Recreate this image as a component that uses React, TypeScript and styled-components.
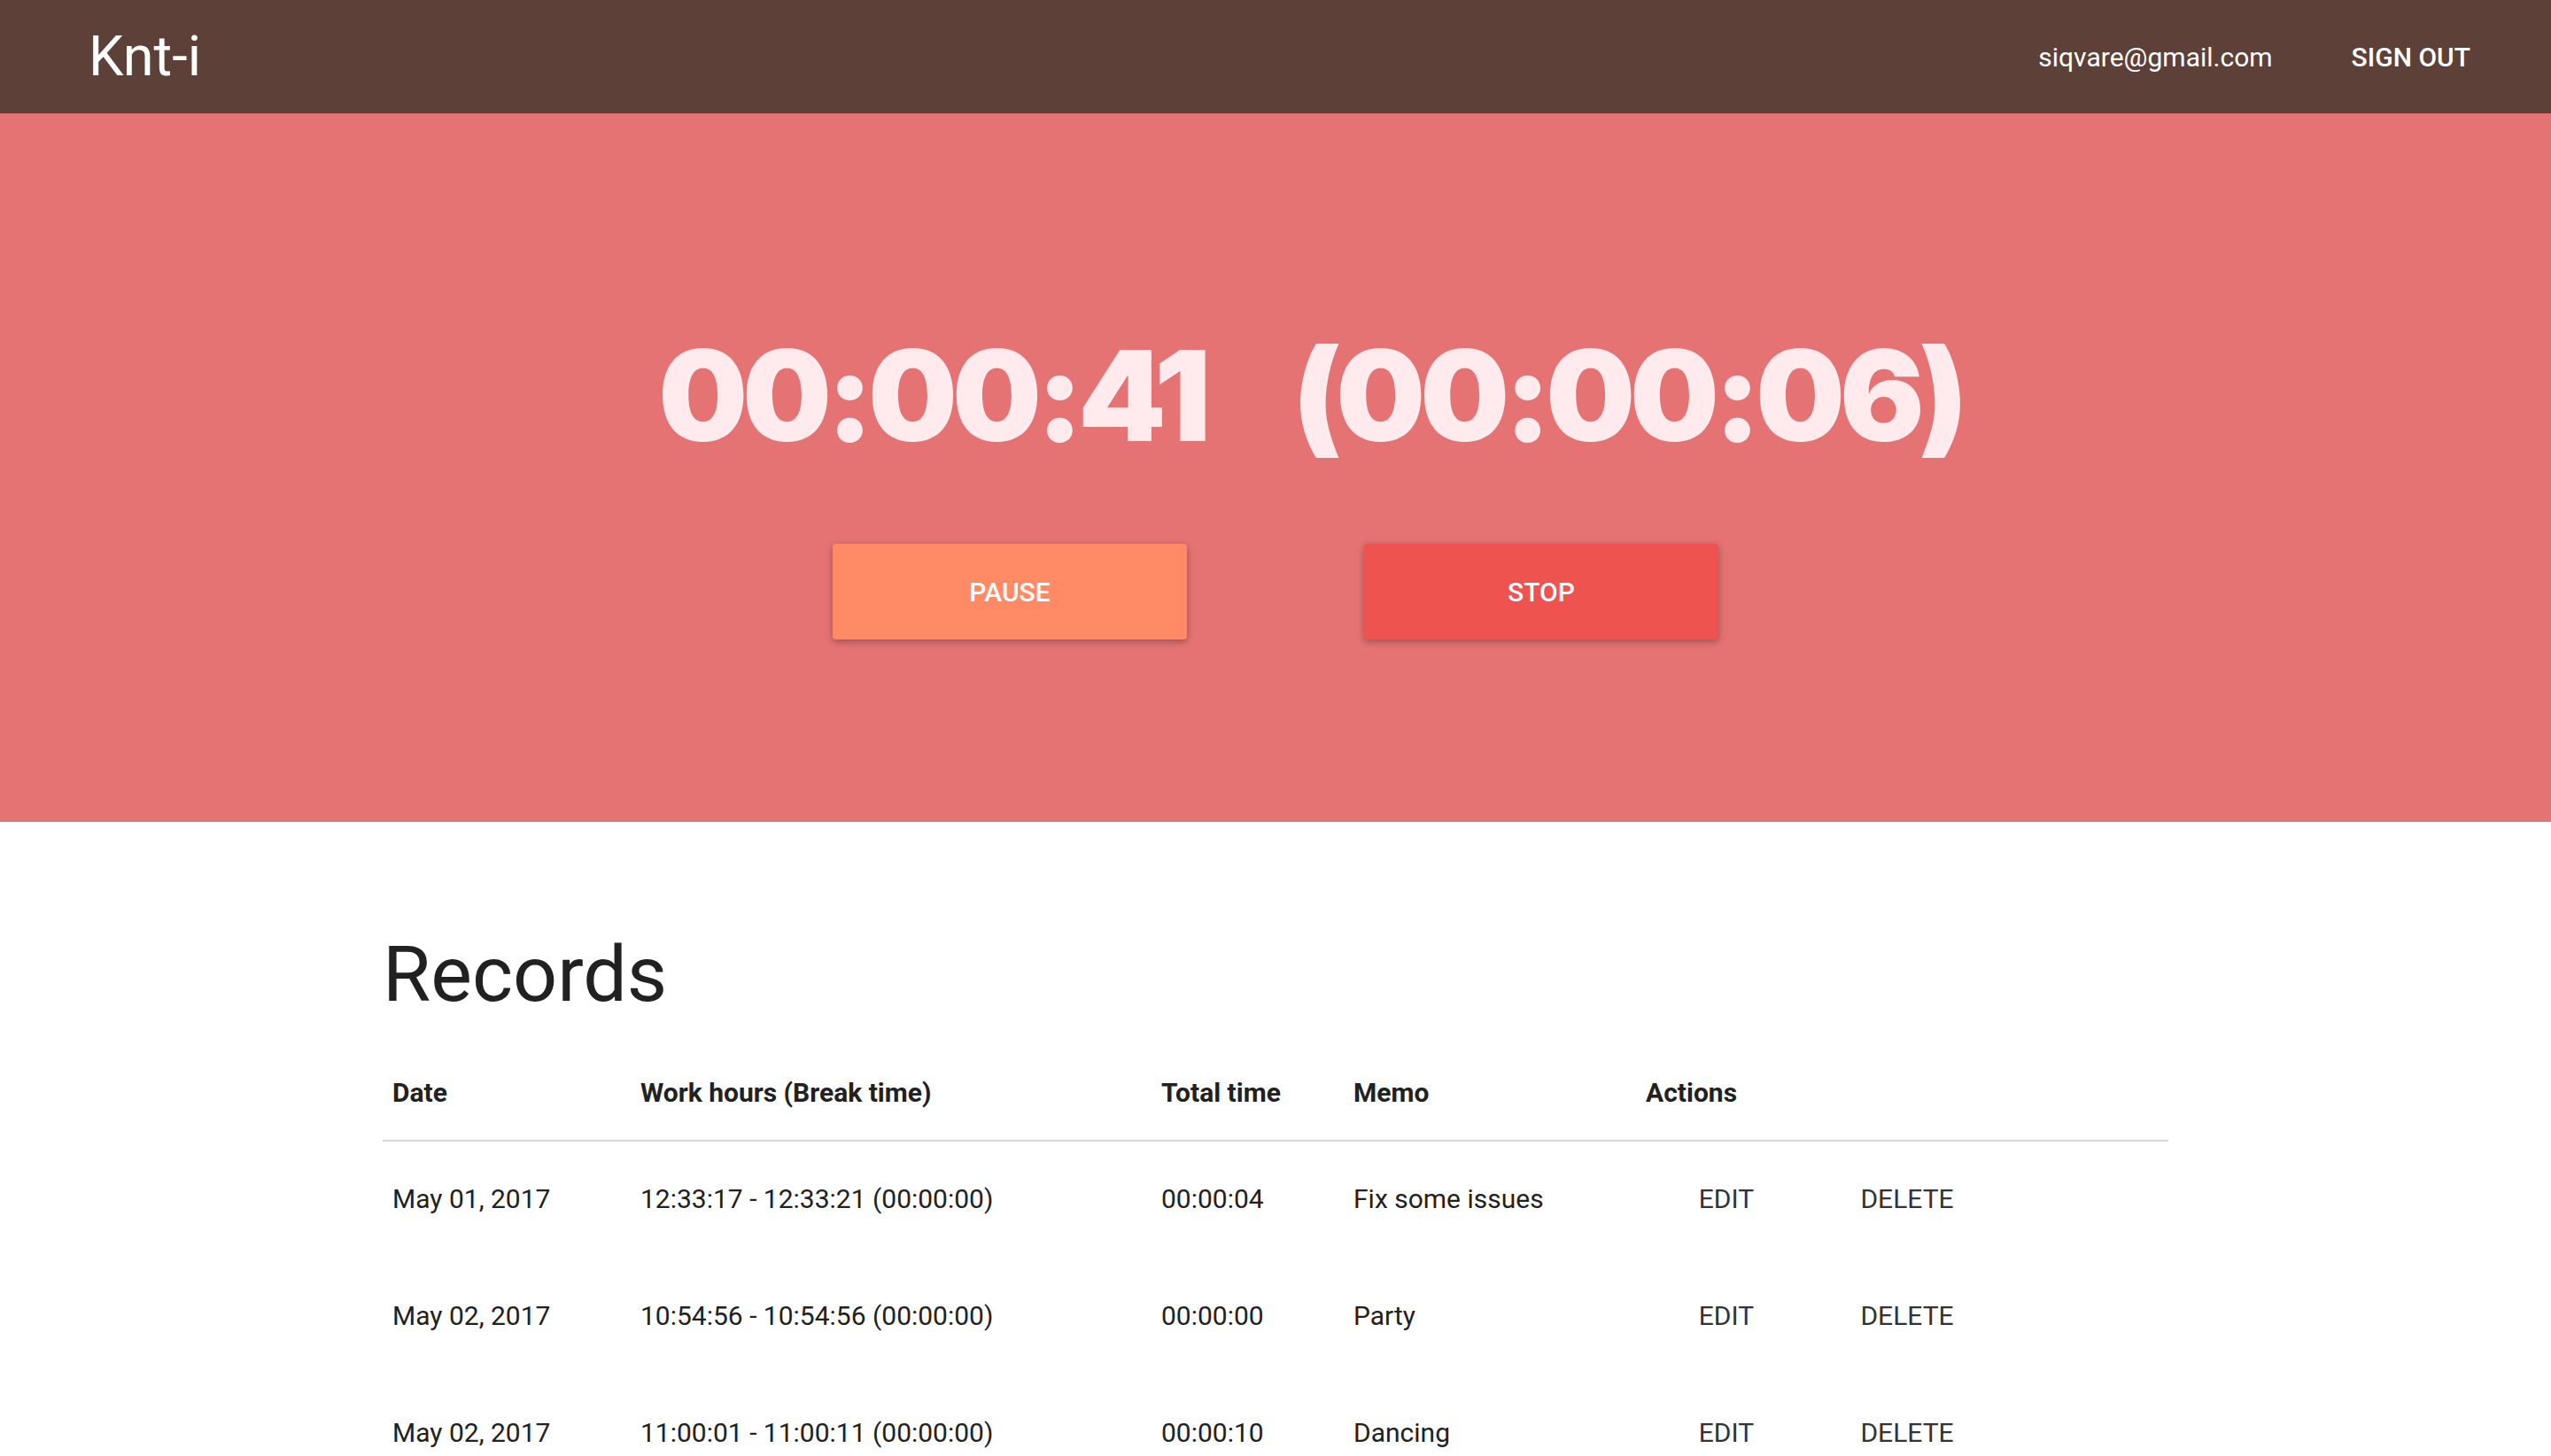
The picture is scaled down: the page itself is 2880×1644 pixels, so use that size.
import React from 'react';
import styled, { createGlobalStyle } from 'styled-components';

const GlobalStyle = createGlobalStyle`
  html, body { margin: 0; padding: 0; background: #ffffff; }
  body { font-family: Roboto, "Liberation Sans", sans-serif; color: #212121; }
  * { box-sizing: border-box; }
`;

const AppBar = styled.header`
  height: 128px;
  background: #5d4037;
  display: flex;
  align-items: center;
  justify-content: space-between;
  padding: 0 59px 0 100px;
  color: #ffffff;
`;

const Title = styled.h1`
  margin: 0;
  font-size: 63px;
  font-weight: 400;
  line-height: 128px;
`;

const UserArea = styled.div`
  display: flex;
  align-items: center;
  gap: 57px;
`;

const Email = styled.span`
  font-size: 30px;
`;

const FlatButton = styled.button`
  background: none;
  border: 0;
  color: inherit;
  font-family: Roboto, "Liberation Sans", sans-serif;
  font-size: 30px;
  font-weight: 500;
  text-transform: uppercase;
  padding: 0 32px;
  height: 72px;
  cursor: pointer;
`;

const Hero = styled.section`
  background: #e57373;
  height: 800px;
  display: flex;
  flex-direction: column;
  align-items: center;
  padding-top: 247px;
`;

const Timer = styled.div`
  display: flex;
  gap: 98px;
  padding-left: 79px;
  font-family: Inter, "Open Sans", sans-serif;
  font-weight: 900;
  font-size: 142px;
  letter-spacing: -6px;
  line-height: 1;
  color: #ffebee;
`;

const Controls = styled.div`
  display: flex;
  gap: 200px;
  margin-top: 97px;
`;

const RaisedButton = styled.button<{ $bg: string }>`
  width: 400px;
  height: 108px;
  background: ${(p) => p.$bg};
  border: 0;
  border-radius: 4px;
  color: #ffffff;
  font-family: Roboto, "Liberation Sans", sans-serif;
  font-size: 30px;
  font-weight: 500;
  text-transform: uppercase;
  box-shadow: 0 2px 12px rgba(0, 0, 0, 0.12), 0 3px 6px rgba(0, 0, 0, 0.2);
  cursor: pointer;
`;

const Records = styled.section`
  width: 70%;
  margin: 0 auto;
  padding-top: 119px;
`;

const Heading = styled.h2`
  margin: 0;
  font-size: 88px;
  font-weight: 400;
  line-height: 106px;
  color: #212121;
`;

const Table = styled.div`
  margin-top: 22px;
`;

const columns = '280px 588px 217px 330px 1fr';

const HeaderRow = styled.div`
  display: grid;
  grid-template-columns: ${columns};
  align-items: center;
  height: 114px;
  padding-top: 4px;
  border-bottom: 2px solid #d6d6d6;
`;

const Row = styled.div`
  display: grid;
  grid-template-columns: ${columns};
  align-items: center;
  height: 132px;
  padding-bottom: 3px;
`;

const HeadCell = styled.div`
  padding-left: 11px;
  font-size: 30px;
  font-weight: 700;
  color: #212121;
  white-space: nowrap;
`;

const Cell = styled.div`
  padding-left: 11px;
  font-size: 30px;
  font-weight: 400;
  color: #212121;
  white-space: nowrap;
`;

const Actions = styled.div`
  padding-left: 11px;
  display: flex;
  gap: 22px;
`;

const TextButton = styled.button`
  width: 182px;
  height: 72px;
  padding: 0;
  background: none;
  border: 0;
  color: #333333;
  font-family: Roboto, "Liberation Sans", sans-serif;
  font-size: 30px;
  font-weight: 400;
  text-transform: uppercase;
  cursor: pointer;
`;

const records = [
  { date: 'May 01, 2017', hours: '12:33:17 - 12:33:21 (00:00:00)', total: '00:00:04', memo: 'Fix some issues' },
  { date: 'May 02, 2017', hours: '10:54:56 - 10:54:56 (00:00:00)', total: '00:00:00', memo: 'Party' },
  { date: 'May 02, 2017', hours: '11:00:01 - 11:00:11 (00:00:00)', total: '00:00:10', memo: 'Dancing' },
];

export default function App() {
  return (
    <>
      <GlobalStyle />
      <AppBar>
        <Title>Knt-i</Title>
        <UserArea>
          <Email>siqvare@gmail.com</Email>
          <FlatButton>Sign out</FlatButton>
        </UserArea>
      </AppBar>
      <Hero>
        <Timer>
          <span>00:00:41</span>
          <span>(00:00:06)</span>
        </Timer>
        <Controls>
          <RaisedButton $bg="#ff8a65">Pause</RaisedButton>
          <RaisedButton $bg="#ef5350">Stop</RaisedButton>
        </Controls>
      </Hero>
      <Records>
        <Heading>Records</Heading>
        <Table>
          <HeaderRow>
            <HeadCell>Date</HeadCell>
            <HeadCell>Work hours (Break time)</HeadCell>
            <HeadCell>Total time</HeadCell>
            <HeadCell>Memo</HeadCell>
            <HeadCell>Actions</HeadCell>
          </HeaderRow>
          {records.map((r, i) => (
            <Row key={i}>
              <Cell>{r.date}</Cell>
              <Cell>{r.hours}</Cell>
              <Cell>{r.total}</Cell>
              <Cell>{r.memo}</Cell>
              <Actions>
                <TextButton>Edit</TextButton>
                <TextButton>Delete</TextButton>
              </Actions>
            </Row>
          ))}
        </Table>
      </Records>
    </>
  );
}
